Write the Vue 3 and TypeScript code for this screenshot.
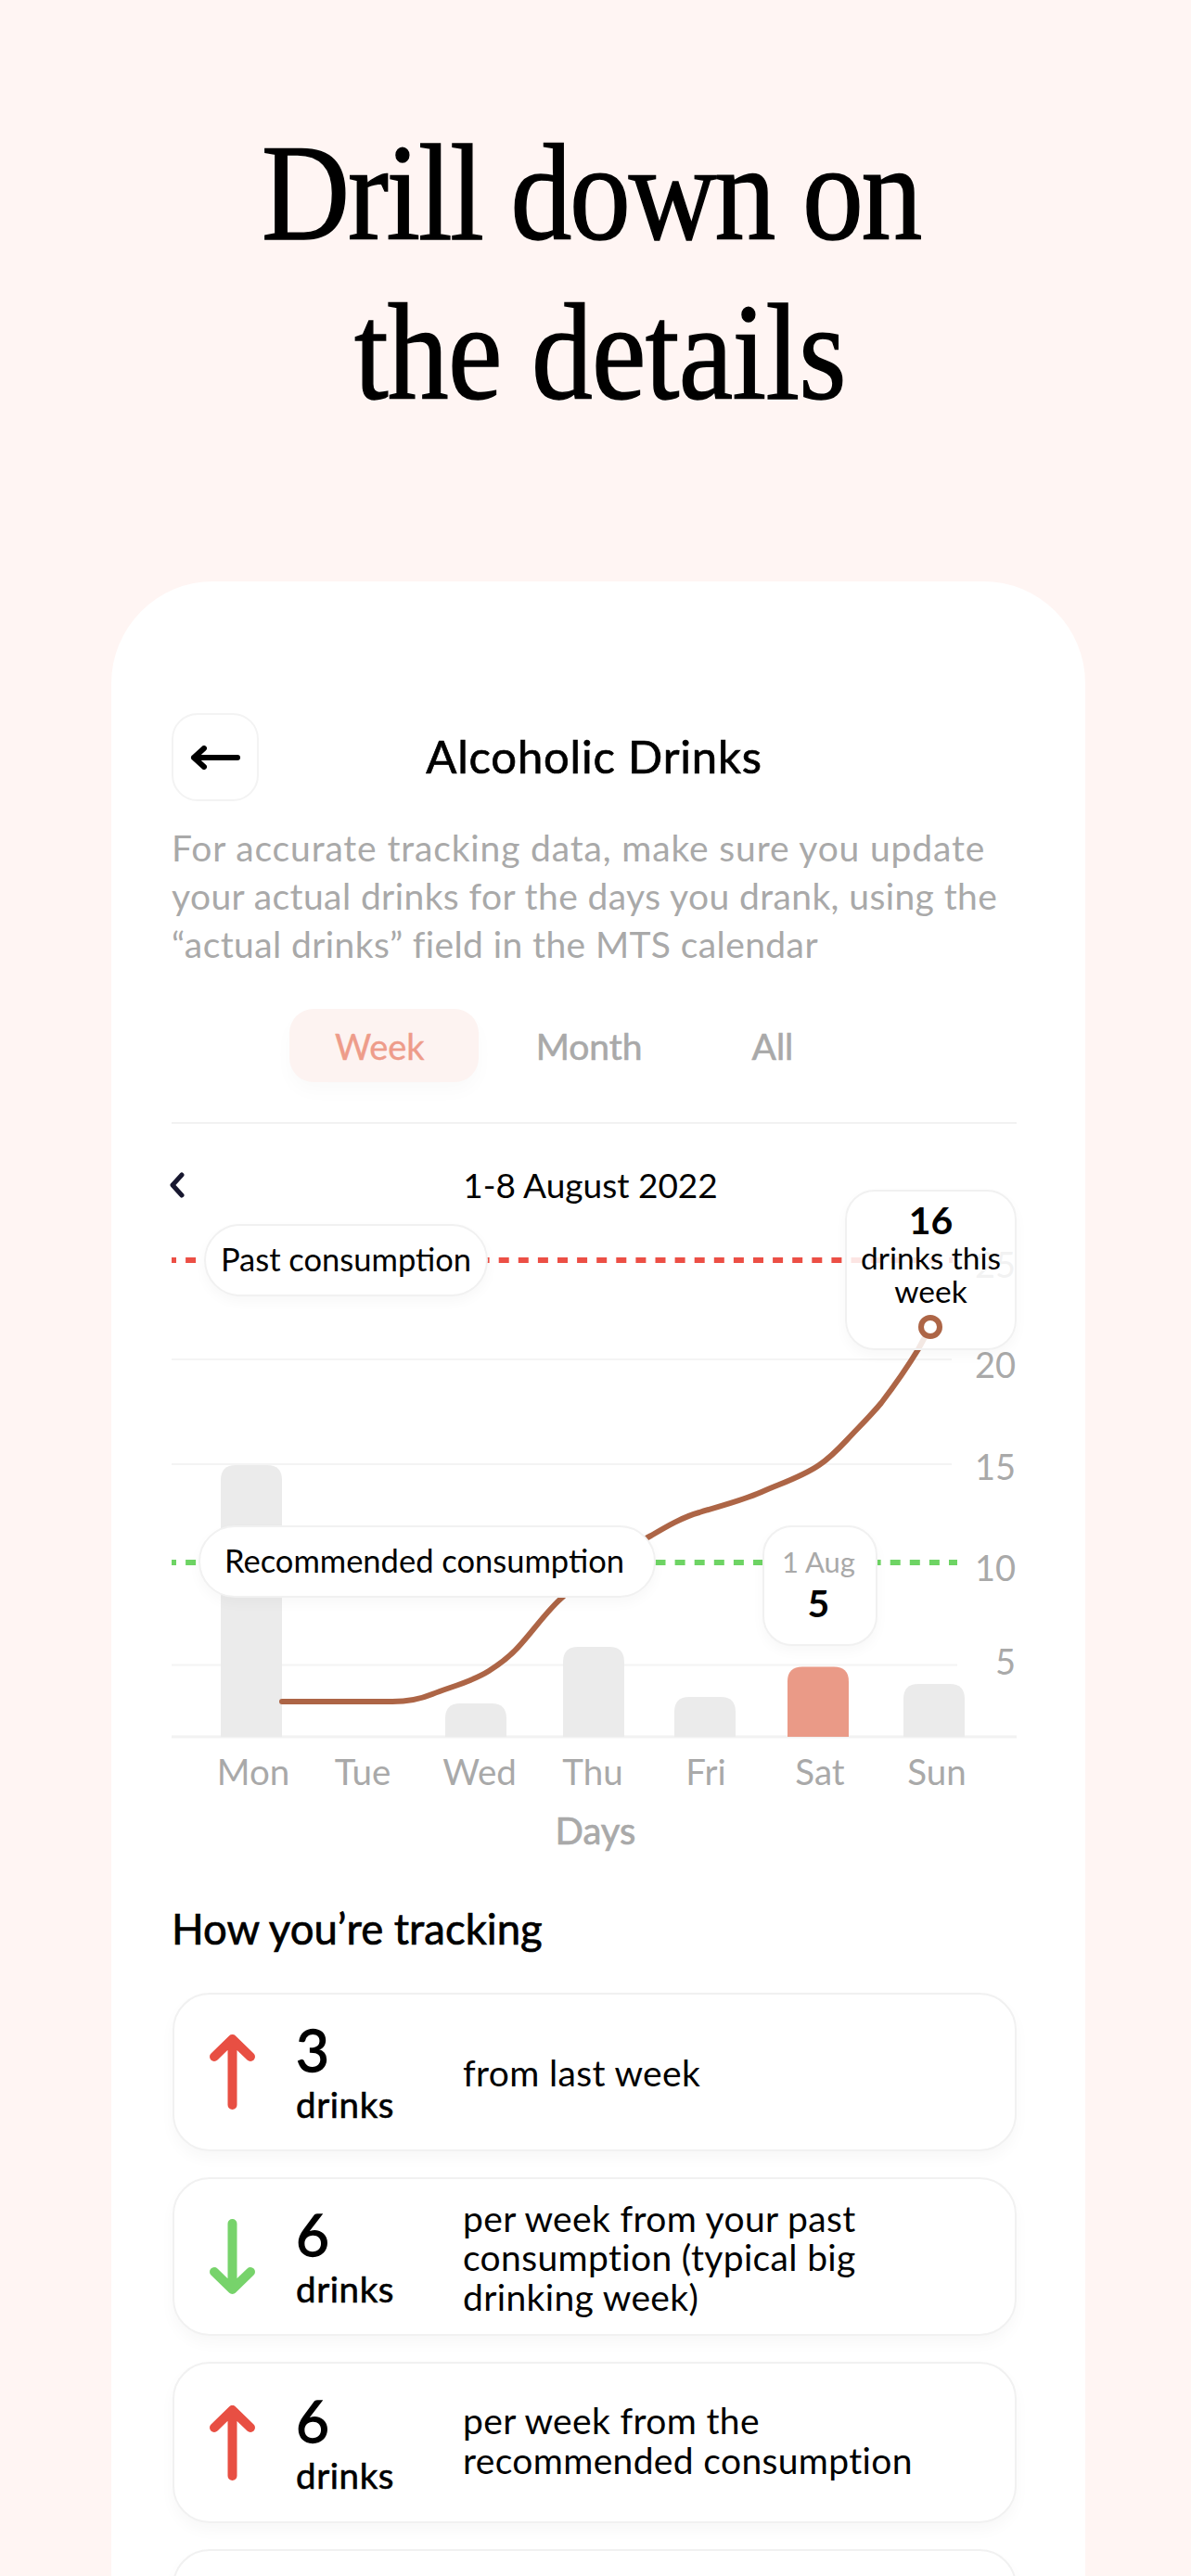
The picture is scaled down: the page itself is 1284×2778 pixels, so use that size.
<script setup lang="ts">
const grid = [
  { y: 146, x2: 840 },
  { y: 259, x2: 840 },
  { y: 475.5, x2: 846 },
]
const ticks = [
  { label: '25', y: 58 },
  { label: '20', y: 166 },
  { label: '15', y: 276 },
  { label: '10', y: 385 },
  { label: '5', y: 486 },
]
const days = [
  { name: 'Mon', x: 87, bar: 52, top: 260 },
  { name: 'Tue', x: 205 },
  { name: 'Wed', x: 331, bar: 294, top: 517 },
  { name: 'Thu', x: 453, bar: 421, top: 456 },
  { name: 'Fri', x: 575, bar: 541, top: 510 },
  { name: 'Sat', x: 698, bar: 663, top: 477.5, active: true },
  { name: 'Sun', x: 824, bar: 788, top: 496 },
]
const stats = [
  { up: true, value: 3, lines: ['from last week'] },
  { up: false, value: 6, lines: ['per week from your past', 'consumption (typical big', 'drinking week)'] },
  { up: true, value: 6, lines: ['per week from the', 'recommended consumption'] },
]

const barPath = (x: number, top: number) => {
  const r = 16
  const w = 66
  return `M${x} 553V${top + r}Q${x} ${top} ${x + r} ${top}H${x + w - r}Q${x + w} ${top} ${x + w} ${top + r}V553Z`
}
</script>

<template>
  <div class="page">
    <h1 class="headline"><span class="first">Drill down on</span><span class="second">the details</span></h1>

    <section class="phone">
      <header class="head">
        <button class="back">
          <svg width="54" height="26" viewBox="0 0 54 26">
            <path d="M51 13H4M15 3L4 13L15 23" fill="none" stroke="#000" stroke-width="6" stroke-linecap="round" stroke-linejoin="round" />
          </svg>
        </button>
        <h2>Alcoholic Drinks</h2>
      </header>

      <p class="intro">
        <span>For accurate tracking data, make sure you update</span>
        <span>your actual drinks for the days you drank, using the</span>
        <span>“actual drinks” field in the MTS calendar</span>
      </p>

      <nav class="tabs">
        <span class="tab on">Week</span>
        <span class="tab">Month</span>
        <span class="tab all">All</span>
      </nav>

      <div class="range">
        <svg width="18" height="28" viewBox="0 0 18 28">
          <path d="M14 3L4 14L14 25" fill="none" stroke="#17172f" stroke-width="5" stroke-linecap="round" stroke-linejoin="round" />
        </svg>
        <span>1-8 August 2022</span>
      </div>

      <div class="plot">
        <svg class="canvas" width="910" height="690" viewBox="0 0 910 690">
          <line v-for="g in grid" :key="g.y" x1="-1" :x2="g.x2" :y1="g.y" :y2="g.y" stroke="#f4f4f4" stroke-width="2" />
          <line x1="-1" x2="910" y1="553" y2="553" stroke="#f2f2f2" stroke-width="3" />

          <template v-for="d in days" :key="d.name">
            <path v-if="d.bar" :d="barPath(d.bar, d.top)" :fill="d.active ? '#ea9a87' : '#ebebeb'" />
            <text class="day" :x="d.x" y="605" text-anchor="middle">{{ d.name }}</text>
          </template>
          <text class="axis-name" x="456" y="669" text-anchor="middle">Days</text>

          <text v-for="t in ticks" :key="t.label" class="tick" x="909" :y="t.y" text-anchor="end">{{ t.label }}</text>

          <line x1="-1" x2="841" y1="39" y2="39" stroke="#ec4f45" stroke-width="6" stroke-dasharray="11 10.1" stroke-dashoffset="6" />
          <line x1="-1" x2="846" y1="365" y2="365" stroke="#6ed464" stroke-width="6" stroke-dasharray="11 10.1" stroke-dashoffset="6" />

          <path
            d="M118 515H237C255 515 268 512 280 507C300 499 322 494 341 482C352 475 362 468 372 457C388 440 405 415 421 402C445 372 490 350 516 336C533 326 550 316 568 311C590 304 612 299 635 289C655 280 678 273 697 260C712 250 722 238 733 226.5C745 214 754 205 764 193C780 172 790 158 804 135L817 111"
            fill="none"
            stroke="#ad6546"
            stroke-width="6"
            stroke-linecap="round"
          />
        </svg>

        <div class="pill past">Past consumption</div>
        <div class="pill recommended">Recommended consumption</div>

        <div class="tip day-tip">
          <span class="muted">1 Aug</span>
          <strong>5</strong>
        </div>

        <div class="tip week-tip">
          <strong>16</strong>
          <span>drinks this</span>
          <span>week</span>
          <i class="dot"></i>
        </div>
      </div>

      <h3 class="sub">How you’re tracking</h3>

      <ul class="stats">
        <li v-for="(s, i) in stats" :key="i" class="stat">
          <svg width="49" height="81" viewBox="0 0 49 81">
            <path
              :d="s.up ? 'M24.5 76V5M5 24L24.5 5L44 24' : 'M24.5 5V76M5 57L24.5 76L44 57'"
              fill="none"
              :stroke="s.up ? '#e84f43' : '#77d36b'"
              stroke-width="10"
              stroke-linecap="round"
              stroke-linejoin="round"
            />
          </svg>
          <div class="amount">
            <b>{{ s.value }}</b>
            <span>drinks</span>
          </div>
          <p>
            <template v-for="l in s.lines" :key="l">{{ l }}<br /></template>
          </p>
        </li>
        <li class="stat"></li>
      </ul>
    </section>
  </div>
</template>

<style>
html,
body {
  margin: 0;
  height: 2778px;
  overflow: hidden;
  background: #fff5f3;
}
</style>

<style scoped>
.page {
  height: 2778px;
  overflow: hidden;
  background: #fff5f3;
  font-family: Lato, "Noto Sans", sans-serif;
  color: #000;
}

.headline {
  margin: 122px 0 0;
  font-family: "Liberation Serif", serif;
  font-size: 148px;
  font-weight: 400;
  line-height: 172px;
  text-align: center;
  -webkit-text-stroke: 1.5px #000;
}

.headline span {
  display: block;
  transform: scaleX(0.89);
}

.first {
  letter-spacing: -2.5px;
  padding-right: 11px;
}

.second {
  letter-spacing: -0.8px;
  padding-left: 11px;
}

.phone {
  width: 1050px;
  height: 2151px;
  box-sizing: border-box;
  margin: 161px 0 0 120px;
  padding: 142px 74px 0 65px;
  background: #fff;
  border-radius: 110px 110px 0 0;
}

.head {
  display: grid;
  grid-template-columns: 93px 1fr 93px;
  align-items: center;
}

.back {
  width: 94px;
  height: 95px;
  padding: 0;
  display: flex;
  align-items: center;
  justify-content: center;
  background: #fff;
  border: 2px solid #f3f3f3;
  border-radius: 28px;
}

.head h2 {
  margin: 0;
  padding-bottom: 3px;
  font-size: 49px;
  font-weight: 400;
  letter-spacing: 0.8px;
  line-height: 60px;
  text-align: center;
  -webkit-text-stroke: 0.7px #000;
}

.intro {
  margin: 24px 0 0;
  font-size: 39px;
  line-height: 52px;
  color: #a9a9a9;
  white-space: nowrap;
}

.intro span {
  display: block;
  letter-spacing: 0.4px;
}

.intro span:first-child {
  letter-spacing: 0.85px;
}

.tabs {
  display: flex;
  margin: 44px 0 0 127px;
  gap: 13px;
}

.tab {
  height: 79px;
  padding: 0 49px;
  display: flex;
  align-items: center;
  font-size: 39px;
  color: #a9a9a9;
  border-radius: 26px;
  -webkit-text-stroke: 0.6px #a9a9a9;
}

.tab.on {
  padding-right: 58px;
  background: #fdf3f1;
  color: #ee9c8a;
  font-size: 38px;
  -webkit-text-stroke: 0.4px #ee9c8a;
  box-shadow: 0 10px 20px rgba(0, 0, 0, 0.025);
}

.tab.all {
  margin-left: 7px;
}

.range {
  position: relative;
  margin-top: 43px;
  padding-top: 41px;
  border-top: 2px solid #f2f2f2;
  height: 50px;
  line-height: 50px;
  font-size: 37px;
  text-align: center;
}

.range svg {
  position: absolute;
  left: -3px;
  top: 52px;
}

.range span {
  margin-right: 8px;
}

.plot {
  position: relative;
  height: 690px;
  margin: 17px 0 0 1px;
}

.canvas {
  display: block;
  overflow: visible;
  font-family: Lato, "Noto Sans", sans-serif;
}

.day {
  font-size: 38.5px;
  fill: #a9a9a9;
}

.axis-name {
  font-size: 40px;
  fill: #a9a9a9;
  stroke: #a9a9a9;
  stroke-width: 0.7px;
}

.tick {
  font-size: 38px;
  fill: #a9a9a9;
}

.pill {
  position: absolute;
  box-sizing: border-box;
  height: 78px;
  padding-bottom: 3px;
  display: flex;
  align-items: center;
  justify-content: center;
  font-size: 34.5px;
  white-space: nowrap;
  background: #fff;
  border: 2px solid #f1f1f1;
  border-radius: 39px;
  box-shadow: 0 6px 14px rgba(0, 0, 0, 0.03);
}

.past {
  left: 34px;
  top: 0;
  width: 306px;
}

.recommended {
  left: 28px;
  top: 325px;
  width: 493px;
  padding-right: 6px;
}

.tip {
  position: absolute;
  box-sizing: border-box;
  display: flex;
  flex-direction: column;
  align-items: center;
  border: 2px solid #f1f1f1;
  border-radius: 32px;
  box-shadow: 0 6px 14px rgba(0, 0, 0, 0.03);
}

.tip strong {
  font-size: 41px;
  font-weight: 700;
}

.day-tip {
  left: 636px;
  top: 325px;
  width: 124px;
  height: 130px;
  padding: 17px 3px 0 0;
  background: #fff;
  font-size: 31px;
}

.day-tip .muted {
  color: #a9a9a9;
  line-height: 40px;
}

.day-tip strong {
  line-height: 50px;
}

.week-tip {
  left: 725px;
  top: -37px;
  width: 185px;
  height: 173px;
  padding-top: 8px;
  background: rgba(255, 255, 255, 0.85);
  font-size: 33.5px;
  line-height: 36px;
}

.week-tip strong {
  line-height: 45px;
}

.dot {
  position: absolute;
  left: 77px;
  top: 133px;
  width: 26px;
  height: 26px;
  box-sizing: border-box;
  background: #fff;
  border: 6px solid #ad6546;
  border-radius: 50%;
}

.sub {
  margin: 45px 0 44px;
  font-size: 45.5px;
  font-weight: 400;
  line-height: 50px;
  -webkit-text-stroke: 0.7px #000;
}

.stats {
  margin: 0;
  padding: 0;
  list-style: none;
  display: flex;
  flex-direction: column;
  gap: 28px;
}

.stat {
  box-sizing: border-box;
  height: 171px;
  flex-shrink: 0;
  margin-left: 1px;
  padding-left: 38px;
  display: grid;
  grid-template-columns: 93px 180px 1fr;
  align-items: center;
  background: #fff;
  border: 2px solid #f1f1f1;
  border-radius: 40px;
  box-shadow: 0 8px 16px rgba(0, 0, 0, 0.03);
}

.stat:nth-child(3) {
  height: 174px;
}

.stat:nth-child(3) p {
  padding: 0 0 5px;
}

.amount {
  display: flex;
  flex-direction: column;
  padding-bottom: 6px;
}

.amount b {
  font-size: 62px;
  font-weight: 400;
  line-height: 75px;
  -webkit-text-stroke: 1.4px #000;
}

.amount span {
  font-size: 38.5px;
  letter-spacing: 0.6px;
  line-height: 42px;
  -webkit-text-stroke: 0.6px #000;
}

.stat p {
  margin: 0;
  padding-top: 2px;
  font-size: 39px;
  letter-spacing: 0.35px;
  line-height: 42.5px;
  white-space: nowrap;
}
</style>
